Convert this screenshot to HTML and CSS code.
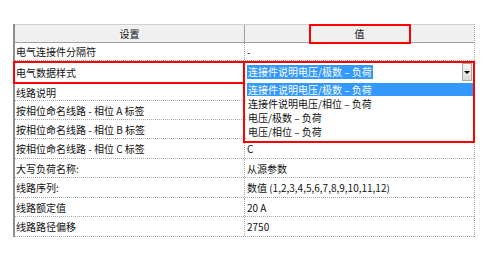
FILE: index.html
```html
<!DOCTYPE html>
<html lang="zh">
<head>
<meta charset="utf-8">
<link rel="stylesheet" href="styles.css">
</head>
<body>
<div class="table">
  <div class="row head h19"><div class="cell">设置</div><div class="cell">值</div></div>
  <div class="row h18"><div class="cell">电气连接件分隔符</div><div class="cell">-</div></div>
  <div class="row h23"><div class="cell">电气数据样式</div>
    <div class="cell combo-cell">
      <div class="combo"><span class="sel">连接件说明电压/极数 – 负荷</span><span class="btn"><span class="tri"></span></span></div>
    </div>
  </div>
  <div class="row h17"><div class="cell">线路说明</div><div class="cell"></div></div>
  <div class="row h19"><div class="cell">按相位命名线路 - 相位 A 标签</div><div class="cell"></div></div>
  <div class="row h19"><div class="cell">按相位命名线路 - 相位 B 标签</div><div class="cell"></div></div>
  <div class="row h20"><div class="cell">按相位命名线路 - 相位 C 标签</div><div class="cell">C</div></div>
  <div class="row h19"><div class="cell">大写负荷名称:</div><div class="cell">从源参数</div></div>
  <div class="row h20"><div class="cell">线路序列:</div><div class="cell">数值 (1,2,3,4,5,6,7,8,9,10,11,12)</div></div>
  <div class="row h19"><div class="cell">线路额定值</div><div class="cell">20 A</div></div>
  <div class="row h20"><div class="cell">线路路径偏移</div><div class="cell">2750</div></div>

  <ul class="list">
    <li class="on">连接件说明电压/极数 – 负荷</li>
    <li>连接件说明电压/相位 – 负荷</li>
    <li>电压/极数 – 负荷</li>
    <li>电压/相位 – 负荷</li>
  </ul>

  <div class="mark mark-head"></div>
  <div class="mark mark-left"></div>
  <div class="mark mark-right"></div>
</div>
</body>
</html>
```
FILE: styles.css
```css
html, body {
  margin: 0;
  padding: 0;
  background: #fff;
}
.table {
  position: relative;
  margin: 24px 0 0 13px;
  width: 462px;
  box-sizing: border-box;
  border-left: 2px solid #8e8e8e;
  border-right: 1px dotted #a8a8a8;
  font-family: "Noto Sans CJK SC", "Microsoft YaHei", sans-serif;
  font-size: 10px;
  color: #111;
}
.row {
  display: grid;
  grid-template-columns: 229px 1fr;
  box-sizing: border-box;
  border-bottom: 1px dotted #a8a8a8;
}
.h17 { height: 17px; }
.h18 { height: 18px; }
.h19 { height: 19px; }
.h20 { height: 20px; }
.h23 { height: 23px; }
.cell {
  display: flex;
  align-items: center;
  padding-left: 1px;
  white-space: nowrap;
  overflow: hidden;
}
.cell + .cell {
  border-left: 1px dotted #a8a8a8;
  padding-left: 2px;
}
.row.head {
  background: #f0f0f0;
  border-top: 1px solid #cfcfcf;
  border-bottom: 1px solid #a0a0a0;
}
.row.head .cell {
  justify-content: center;
  padding-left: 0;
}
.row.head .cell + .cell {
  border-left: 1px solid #a0a0a0;
}
.combo-cell {
  padding-left: 1px;
}
.combo {
  flex: 1;
  display: flex;
  align-items: center;
  justify-content: space-between;
  height: 20px;
  padding-right: 1px;
}
.sel {
  background: #3399ff;
  color: #fff;
  line-height: 14px;
  padding: 0 1px;
}
.btn {
  width: 10px;
  height: 18px;
  box-sizing: border-box;
  border: 1px solid #a8a8a8;
  background: linear-gradient(#f6f6f6, #d9d9d9);
  display: flex;
  align-items: center;
  justify-content: center;
  margin-right: 1px;
}
.tri {
  width: 0;
  height: 0;
  border-left: 3px solid transparent;
  border-right: 3px solid transparent;
  border-top: 3px solid #000;
}
.list {
  position: absolute;
  left: 231px;
  top: 59px;
  width: 230px;
  height: 58px;
  margin: 0;
  padding: 0 0 0 1px;
  box-sizing: border-box;
  list-style: none;
  background: #fff;
}
.list li {
  height: 14px;
  line-height: 14px;
  padding-left: 1px;
  white-space: nowrap;
}
.list li.on {
  background: #3399ff;
  color: #fff;
  margin-right: 2px;
  height: 13px;
  line-height: 13px;
  margin-bottom: 1px;
}
.mark {
  position: absolute;
  box-sizing: border-box;
  border: 2px solid #ff0000;
}
.mark-head {
  left: 294px;
  top: 0;
  width: 102px;
  height: 20px;
}
.mark-left {
  left: -2px;
  top: 37px;
  width: 232px;
  height: 23px;
}
.mark-right {
  left: 228px;
  top: 37px;
  width: 232px;
  height: 82px;
}
```
